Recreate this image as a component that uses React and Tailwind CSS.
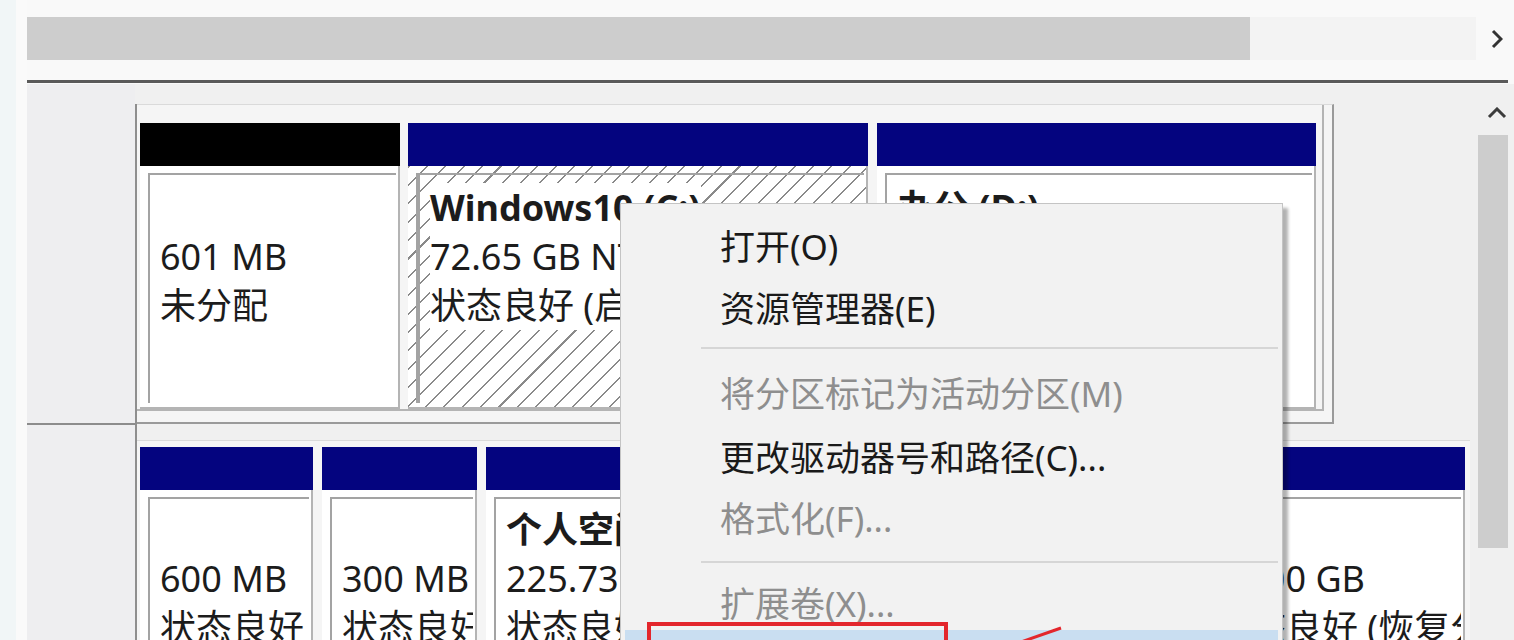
import React from "react";

const HATCH =
  "bg-[image:repeating-linear-gradient(135deg,#8a8a8a_0px,#8a8a8a_1.5px,#ffffff_1.5px,#ffffff_13px)]";

function Part({ w, header, lines, selected, pt, extra = "" }) {
  return (
    <div className={`flex flex-col shrink-0 ${w} ${extra}`}>
      <div className={`h-[43px] shrink-0 ${header}`} />
      <div
        className={`flex-1 min-h-0 pt-[7px] pl-[8px] pr-[2px] pb-[4px] border-r-2 border-b-2 border-[#b4b4b4] ${
          selected ? HATCH : "bg-white"
        }`}
      >
        <div
          className={`h-full overflow-hidden border-l-2 border-t-2 border-[#a3a3a3] pl-[10px] ${pt} ${
            selected ? "border-l-[4px] border-[#9a9a9a]" : ""
          }`}
        >
          {lines.map((l, i) =>
            l.text === "" ? (
              <div key={i} className="h-[49px]" />
            ) : (
              <div
                key={i}
                className={`h-[49px] leading-[49px] whitespace-nowrap w-fit bg-white ${
                  l.bold ? "font-bold" : "font-normal"
                }`}
              >
                {l.text}
              </div>
            )
          )}
        </div>
      </div>
    </div>
  );
}

function Item({ h, disabled, children }) {
  return (
    <div
      className={`${h} flex items-center pl-[99px] whitespace-nowrap leading-none ${
        disabled ? "text-[#8e8e8e]" : "text-[#1a1a1a]"
      }`}
    >
      {children}
    </div>
  );
}

export default function App() {
  const NAVY = "bg-[#04047f]";
  return (
    <div className="relative w-[1514px] h-[640px] overflow-hidden bg-[#f9f9f9] flex font-['Noto_Sans','Noto_Sans_CJK_SC',sans-serif] text-[36px] text-[#1c1c1c]">
      <div className="w-[16px] shrink-0 bg-[#f1f6f7]" />
      <div className="w-[11px] shrink-0 bg-[#fafafa]" />
      <div className="flex-1 flex flex-col min-w-0">
        {/* top area with horizontal scrollbar */}
        <div className="h-[84px] shrink-0 flex flex-col">
          <div className="h-[17px]" />
          <div className="h-[43px] flex">
            <div className="w-[1223px] bg-[#cdcdcd]" />
            <div className="flex-1 bg-[#f3f3f3]" />
            <div className="w-[38px] flex items-center justify-center pl-[4px]">
              <svg width="12" height="20" viewBox="0 0 12 20">
                <polyline
                  points="2,2 10,10 2,18"
                  fill="none"
                  stroke="#333"
                  strokeWidth="3"
                />
              </svg>
            </div>
          </div>
          <div className="h-[20px]" />
          <div className="h-[3px] bg-[#5a5a5a] mr-[6px]" />
          <div className="h-[1px]" />
        </div>

        {/* lower area */}
        <div className="flex-1 flex min-h-0">
          {/* label column */}
          <div className="w-[108px] shrink-0 flex flex-col">
            <div className="h-[341px] shrink-0 bg-[#eeeef0] border-b-2 border-[#8c8c8c]" />
            <div className="flex-1 bg-[#eeeef0]" />
          </div>

          {/* disk area */}
          <div className="w-[1341px] shrink-0 bg-[#f0f0f0] flex flex-col pt-[20px]">
            <div className="flex-1 border-l-2 border-[#8e8e8e] flex flex-col min-h-0">
              {/* disk 0 */}
              <div className="w-[1197px] h-[320px] shrink-0 bg-[#f5f5f5] border-t border-r-2 border-b-2 border-t-[#dadada] border-r-[#9a9a9a] border-b-[#9a9a9a] flex flex-col">
                <div className="flex-1 mr-[8px] mb-[11px] border-r-2 border-b-2 border-[#b4b4b4] pt-[18px] pl-[3px] pr-[6px] flex gap-[8px]">
                  <Part
                    w="w-[260px]"
                    header="bg-black"
                    pt="pt-[8px]"
                    lines={[{ text: "" }, { text: "601 MB" }, { text: "未分配" }]}
                  />
                  <Part
                    w="w-[460px]"
                    header={NAVY}
                    pt="pt-[8px]"
                    selected
                    lines={[
                      { text: "Windows10 (C:)", bold: true },
                      { text: "72.65 GB NTFS" },
                      { text: "状态良好 (启动, 页面文件, 故障转储, 主分区)" },
                    ]}
                  />
                  <Part
                    w="w-[439px]"
                    extra="ml-[1px]"
                    header={NAVY}
                    pt="pt-[8px]"
                    lines={[
                      { text: "办公 (D:)", bold: true },
                      { text: "146.48 GB NTFS" },
                      { text: "状态良好 (主分区)" },
                    ]}
                  />
                </div>
              </div>

              {/* disk 1 */}
              <div className="mt-[16px] w-[1333px] h-[260px] shrink-0 bg-[#f5f5f5] border-t border-[#dadada] pt-[6px] pl-[3px] flex gap-[9px]">
                <Part
                  w="w-[173px]"
                  header={NAVY}
                  pt="pt-[6px]"
                  lines={[{ text: "" }, { text: "600 MB" }, { text: "状态良好 (恢复分区)" }]}
                />
                <Part
                  w="w-[155px]"
                  header={NAVY}
                  pt="pt-[6px]"
                  lines={[{ text: "" }, { text: "300 MB" }, { text: "状态良好 (EFI 系统分区)" }]}
                />
                <Part
                  w="w-[699px]"
                  header={NAVY}
                  pt="pt-[6px]"
                  lines={[
                    { text: "个人空间 (E:)", bold: true },
                    { text: "225.73 GB NTFS" },
                    { text: "状态良好 (主分区)" },
                  ]}
                />
                <Part
                  w="w-[271px]"
                  header={NAVY}
                  pt="pt-[6px]"
                  lines={[{ text: "" }, { text: "10.00 GB" }, { text: "状态良好 (恢复分区)" }]}
                />
              </div>
            </div>
          </div>

          {/* vertical scrollbar */}
          <div className="w-[38px] shrink-0 bg-[#f0f0f0] flex flex-col">
            <div className="h-[51px] flex items-center justify-center pt-[6px] pl-[4px]">
              <svg width="20" height="12" viewBox="0 0 20 12">
                <polyline
                  points="2,10 10,2 18,10"
                  fill="none"
                  stroke="#3c3c3c"
                  strokeWidth="3"
                />
              </svg>
            </div>
            <div className="ml-[2px] w-[30px] h-[413px] bg-[#cdcdcd]" />
          </div>
        </div>
      </div>

      {/* context menu */}
      <div className="absolute left-[620px] top-[203px] w-[663px] h-[480px] bg-[#f2f2f2] border border-[#c4c4c4] shadow-[5px_5px_3px_rgba(0,0,0,0.3)] text-[35px] pt-[11px]">
        <Item h="h-[62px]">打开(O)</Item>
        <Item h="h-[62px]">资源管理器(E)</Item>
        <div className="h-[22px] pt-[8px] pl-[80px] pr-[4px]">
          <div className="h-[2px] bg-[#d6d6d6]" />
        </div>
        <Item h="h-[64px]" disabled>
          将分区标记为活动分区(M)
        </Item>
        <Item h="h-[64px]">更改驱动器号和路径(C)...</Item>
        <Item h="h-[58px]" disabled>
          格式化(F)...
        </Item>
        <div className="h-[29px] pt-[14px] pl-[80px] pr-[4px]">
          <div className="h-[2px] bg-[#d6d6d6]" />
        </div>
        <Item h="h-[54px]" disabled>
          扩展卷(X)...
        </Item>
        <div className="mx-[4px] h-[62px] bg-[#c9def1] flex items-center pl-[95px] text-[#1a1a1a] leading-none whitespace-nowrap">
          压缩卷(H)...
        </div>
      </div>

      {/* annotation: red box and arrow */}
      <div className="absolute left-[647px] top-[622px] w-[301px] h-[40px] border-[4px] border-[#e3262c]" />
      <svg
        className="absolute left-[1015px] top-[620px]"
        width="60"
        height="24"
        viewBox="0 0 60 24"
      >
        <line x1="6" y1="22" x2="46" y2="8" stroke="#e3262c" strokeWidth="3" />
      </svg>
    </div>
  );
}
